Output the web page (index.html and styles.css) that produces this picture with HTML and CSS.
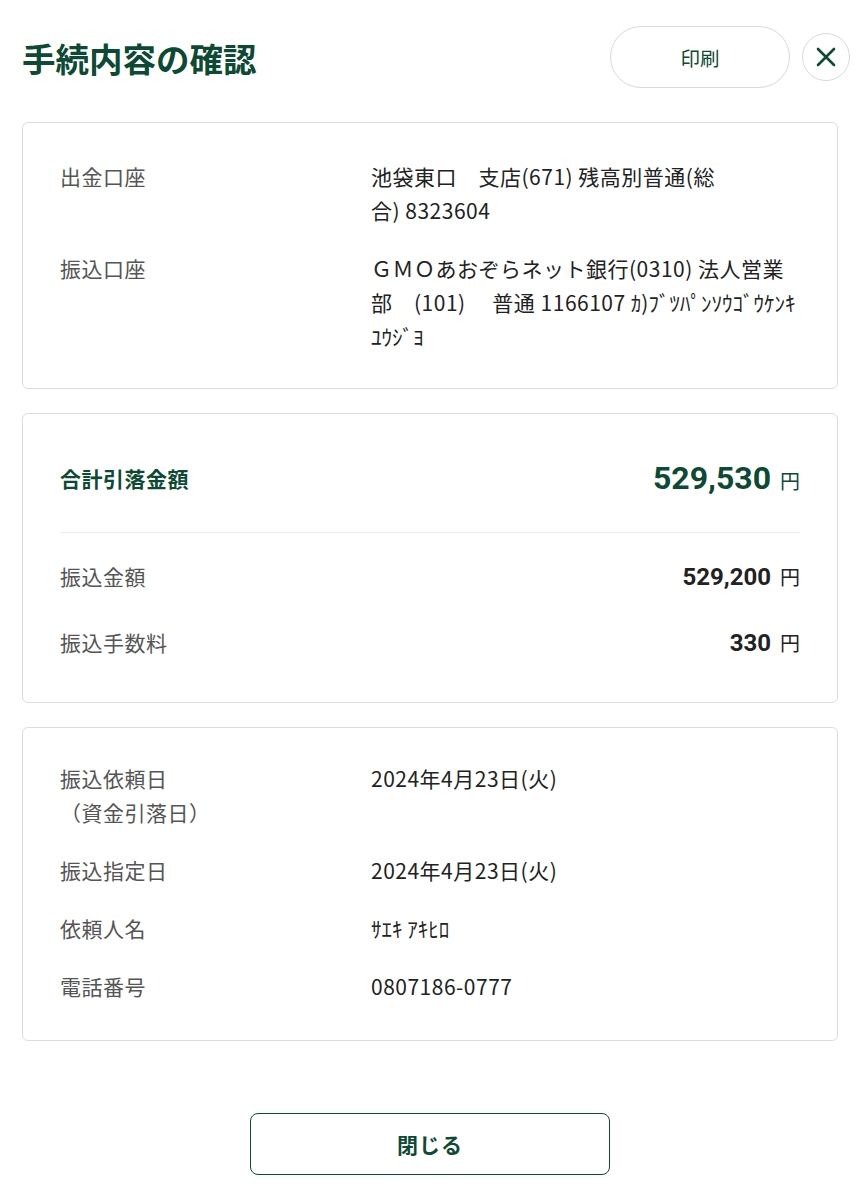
FILE: index.html
```html
<!DOCTYPE html>
<html lang="ja">
<head>
  <meta charset="utf-8">
  <title>手続内容の確認</title>
  <meta name="viewport" content="width=device-width, initial-scale=1.0">
  <link rel="stylesheet" href="styles.css">
</head>
<body>
  <div class="page">
    <div class="header">
      <h1>手続内容の確認</h1>
      <div class="header-actions">
        <button class="print-btn" type="button">印刷</button>
        <button class="close-icon" type="button" aria-label="閉じる">
          <svg width="22" height="22" viewBox="0 0 22 22">
            <path d="M3 3 L19 19 M19 3 L3 19" stroke="#0d4a33" stroke-width="2.6" stroke-linecap="round" fill="none"/>
          </svg>
        </button>
      </div>
    </div>

    <div class="card">
      <div class="row">
        <div class="label">出金口座</div>
        <div class="value">池袋東口　支店(671) 残高別普通(総<br>合) 8323604</div>
      </div>
      <div class="row">
        <div class="label">振込口座</div>
        <div class="value">ＧＭＯあおぞらネット銀行(0310) 法人営業部　(101)　 普通 1166107 <span class="kana">ｶ)ﾌﾞﾂﾊﾟﾝｿｳｺﾞｳｹﾝｷﾕｳｼﾞﾖ</span></div>
      </div>
    </div>

    <div class="card card-amount">
      <div class="total-row">
        <div class="total-label">合計引落金額</div>
        <div class="total-value"><span class="num">529,530</span><span class="yen">円</span></div>
      </div>
      <div class="amount-row first">
        <div class="label">振込金額</div>
        <div class="amount"><span class="num">529,200</span><span class="yen">円</span></div>
      </div>
      <div class="amount-row">
        <div class="label">振込手数料</div>
        <div class="amount"><span class="num">330</span><span class="yen">円</span></div>
      </div>
    </div>

    <div class="card card-info">
      <div class="row">
        <div class="label">振込依頼日<br>（資金引落日）</div>
        <div class="value">2024年4月23日(火)</div>
      </div>
      <div class="row">
        <div class="label">振込指定日</div>
        <div class="value">2024年4月23日(火)</div>
      </div>
      <div class="row">
        <div class="label">依頼人名</div>
        <div class="value"><span class="kana">ｻｴｷ ｱｷﾋﾛ</span></div>
      </div>
      <div class="row">
        <div class="label">電話番号</div>
        <div class="value">0807186-0777</div>
      </div>
    </div>

    <div class="footer">
      <button class="close-btn" type="button">閉じる</button>
    </div>
  </div>
</body>
</html>
```

FILE: styles.css
```css
* {
  margin: 0;
  padding: 0;
  box-sizing: border-box;
}

body {
  font-family: "Noto Sans CJK JP", "Noto Sans", sans-serif;
  background: #fff;
  color: #222;
}

.page {
  padding: 26px 10px 0 22px;
}

.header {
  display: flex;
  align-items: center;
  justify-content: space-between;
  height: 62px;
  margin-bottom: 34px;
}

.header h1 {
  font-size: 33.5px;
  font-weight: 700;
  color: #0d4a33;
}

.header-actions {
  display: flex;
  align-items: center;
  gap: 12px;
}

.print-btn {
  width: 180px;
  height: 62px;
  border: 1px solid #d9d9d9;
  border-radius: 31px;
  background: #fff;
  color: #0d4a33;
  font-family: inherit;
  font-size: 19.5px;
}

.close-icon {
  width: 48px;
  height: 48px;
  border: 1px solid #d9d9d9;
  border-radius: 50%;
  background: #fff;
  display: flex;
  align-items: center;
  justify-content: center;
}

.card {
  width: 816px;
  border: 1px solid #dcdcdc;
  border-radius: 6px;
  padding: 36px 37px 35px;
  margin-bottom: 24px;
}

.row {
  display: flex;
  font-size: 21px;
  line-height: 34px;
  letter-spacing: 0.5px;
}

.row + .row {
  margin-top: 24px;
}

.label {
  width: 311px;
  flex-shrink: 0;
  color: #555;
  font-size: 21px;
  letter-spacing: 0.5px;
}

.value {
  flex: 1;
  color: #222;
}

.kana {
  letter-spacing: 0;
}

.card-info {
  padding-top: 33px;
  padding-bottom: 37px;
}

/* amount card */
.card-amount {
  padding-top: 36px;
  padding-bottom: 43px;
}

.total-row {
  display: flex;
  align-items: center;
  justify-content: space-between;
  height: 56px;
  margin-bottom: 26px;
}

.total-label {
  font-size: 21px;
  font-weight: 700;
  letter-spacing: 0.5px;
  color: #0d4a33;
}

.total-value {
  color: #0d4a33;
  display: flex;
  align-items: baseline;
}

.total-value .num {
  font-family: Roboto, "Noto Sans CJK JP", sans-serif;
  font-size: 32px;
  font-weight: 700;
}

.yen {
  font-size: 20px;
  margin-left: 9px;
}

.amount-row {
  display: flex;
  align-items: center;
  justify-content: space-between;
  height: 34px;
  margin-top: 34px;
}

.amount-row.first {
  border-top: 1px solid #ececec;
  padding-top: 24px;
  height: 59px;
  margin-top: 0;
  align-items: flex-end;
}

.amount {
  display: flex;
  align-items: baseline;
  color: #222;
}

.amount .num {
  font-family: Roboto, "Noto Sans CJK JP", sans-serif;
  font-size: 24px;
  font-weight: 700;
}

.footer {
  display: flex;
  justify-content: center;
  padding: 48px 0 24px;
  width: 816px;
}

.close-btn {
  width: 360px;
  height: 62px;
  border: 1.5px solid #0d4a33;
  border-radius: 8px;
  background: #fff;
  color: #0d4a33;
  font-family: inherit;
  font-size: 21px;
  font-weight: 700;
  letter-spacing: 1px;
}
```
